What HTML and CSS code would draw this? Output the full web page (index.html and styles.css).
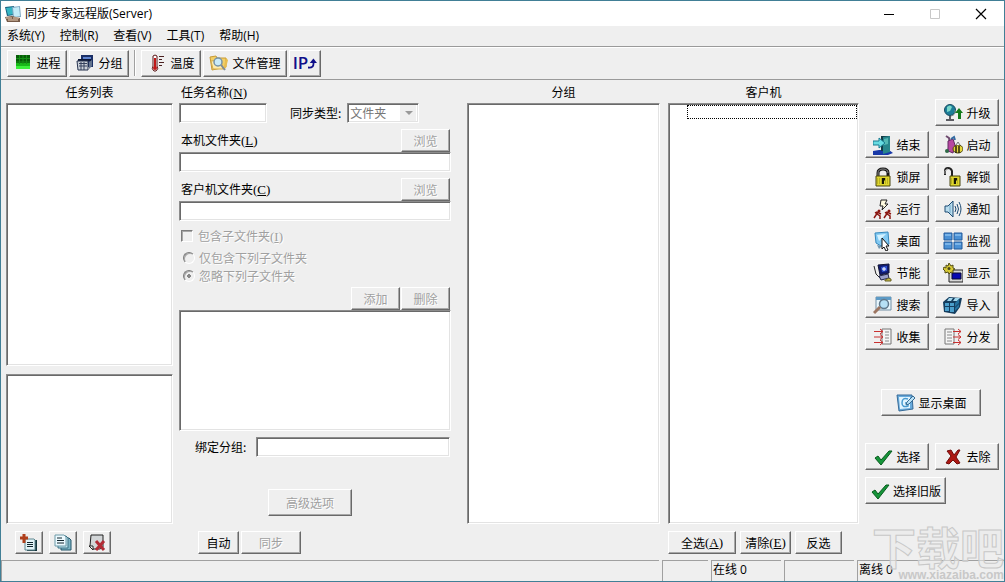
FILE: index.html
```html
<!DOCTYPE html>
<html lang="zh-CN">
<head>
    <meta charset="UTF-8">
    <meta name="viewport" content="width=device-width, initial-scale=1.0">
    <title>同步专家远程版(Server)</title>
    <link rel="stylesheet" href="styles.css">
</head>
<body>
<div class="window">
    <header class="titlebar">
        <svg class="app-icon" viewBox="0 0 18 18">
            <path d="M1 2l9-1 1 9-8 1z" fill="#16617f"/>
            <path d="M2 3l7-1 1 7-6 1z" fill="#35b6c4"/>
            <path d="M8 2l8-1 1 11-8 1z" fill="#7ea9c4"/>
            <path d="M9 3l6-1 1 9-6 1z" fill="#c3ecf8"/>
            <path d="M1 12l7-1 8 2v4H3z" fill="#765b49"/>
            <path d="M2 13h6M4 15h10M9 13h6" stroke="#eed6bc"/>
        </svg>
        <h1>同步专家远程版(Server)</h1>
        <div class="window-controls">
            <button type="button" aria-label="最小化"><svg viewBox="0 0 12 12"><path d="M1 6.500h10" stroke="#000"/></svg></button>
            <button type="button" aria-label="最大化" disabled><svg viewBox="0 0 12 12"><path d="M1.500 1.500h9v9h-9z" fill="none" stroke="#c8c8c8"/></svg></button>
            <button type="button" aria-label="关闭"><svg viewBox="0 0 12 12"><path d="M1 1l10 10M11 1L1 11" stroke="#000" stroke-width="1.200"/></svg></button>
        </div>
    </header>

    <nav class="menubar">
        <button type="button">系统(Y)</button>
        <button type="button">控制(R)</button>
        <button type="button">查看(V)</button>
        <button type="button">工具(T)</button>
        <button type="button">帮助(H)</button>
    </nav>

    <div class="toolbar">
        <button type="button" class="btn">
            <svg class="icon" viewBox="0 0 20 20">
                <path d="M3 2h14v14H3z" fill="#075c07"/>
                <path d="M3 10h14v6H3z" fill="#19b819"/>
                <path d="M3 13h14v3H3z" fill="#3cf03c"/>
                <path d="M6.500 2v9M10 2v9M13.500 2v9M3 5.500h14M3 9h14" stroke="#159015"/>
            </svg>
            进程
        </button>
        <button type="button" class="btn">
            <svg class="icon" viewBox="0 0 20 20">
                <path d="M6 2h12v12H6z" fill="#1b2f66"/>
                <path d="M8 4h8v2H8z" fill="#5e83cf"/>
                <path d="M3 6h13v2H3z" fill="#0d1838"/>
                <path d="M2 8h11v9H3z" fill="#ccd2da" stroke="#26334f"/>
                <path d="M4 10.500h8M4 13h8M6 9v8M9 9v8" stroke="#34415c"/>
                <path d="M14 9l3-2v6l-3 3z" fill="#64748e"/>
            </svg>
            分组
        </button>
        <span class="separator"></span>
        <button type="button" class="btn">
            <svg class="icon" viewBox="0 0 20 20">
                <path d="M6 3q2-2 4 0v10q2 3-1 5H7q-3-2-1-5z" fill="#fff" stroke="#5a1414"/>
                <path d="M8 5v9" stroke="#c01818" stroke-width="2"/>
                <circle cx="8" cy="15" r="2" fill="#c01818"/>
                <path d="M12 3.500h5M12 6.500h3M12 9.500h5M12 12.500h3" stroke="#4a2020"/>
            </svg>
            温度
        </button>
        <button type="button" class="btn">
            <svg class="icon" viewBox="0 0 20 20">
                <path d="M1 4l6-1 1 2h9v9L3 17z" fill="#f3cf66" stroke="#c79a34"/>
                <path d="M2 8l10-1 2 9H4z" fill="#ffebaa" stroke="#d4ab4a"/>
                <path d="M17 5l2 2-2 8-3 2z" fill="#e8bd50"/>
                <circle cx="9" cy="9" r="4" fill="#c9eaf8" stroke="#7792a6" stroke-width="1.500"/>
                <path d="M12 12l4 5" stroke="#7e8c98" stroke-width="2"/>
            </svg>
            文件管理
        </button>
        <button type="button" class="btn btn-ip" aria-label="IP">
            <span>IP</span>
            <svg viewBox="0 0 10 14"><path d="M0 12q7 1 6-6" fill="none" stroke="#10108a" stroke-width="2"/><path d="M2 7l4-5 4 5z" fill="#10108a"/></svg>
        </button>
    </div>

    <main class="workspace">
        <section class="column tasks">
            <h2>任务列表</h2>
            <ul class="listbox task-list"></ul>
            <ul class="listbox task-detail"></ul>
            <div class="actions task-actions">
                <button type="button" class="btn" aria-label="新建任务">
                    <svg class="icon" viewBox="0 0 20 20">
                        <path d="M8 7h10v11H8z" fill="#16353d"/>
                        <path d="M6 6h9l1 1v10H6z" fill="#e3f4f8" stroke="#5f8790"/>
                        <path d="M8 9.500h6M8 11.500h6M8 13.500h6" stroke="#10242c"/>
                        <path d="M5 1v9M1 5h8" stroke="#b0401c" stroke-width="3"/>
                    </svg>
                </button>
                <button type="button" class="btn" aria-label="复制任务">
                    <svg class="icon" viewBox="0 0 20 20">
                        <path d="M8 5h8l2 2v10H8z" fill="#7cb4c4" stroke="#24566a"/>
                        <path d="M5 3h8l2 2v10H5z" fill="#b9dfe9" stroke="#3d7386"/>
                        <path d="M2 2h9l2 2v9H2z" fill="#edfaff" stroke="#6c9aa8"/>
                        <path d="M4 5h5M4 7.500h7M4 10h7" stroke="#10242c"/>
                    </svg>
                </button>
                <button type="button" class="btn" aria-label="删除任务">
                    <svg class="icon" viewBox="0 0 20 20">
                        <path d="M4 2h12v12l-3 2H6l-3-3z" fill="#d3d6d8" stroke="#222"/>
                        <path d="M2 13h4v4z" fill="#fff" stroke="#222"/>
                        <path d="M9 8l8 9M17 8l-8 9" stroke="#b22b35" stroke-width="3"/>
                    </svg>
                </button>
            </div>
        </section>

        <form class="task-form">
            <label class="heading" for="taskName">任务名称<span class="key">(<u>N</u>)</span></label>
            <div class="row">
                <input type="text" id="taskName" class="field field-name">
                <label for="syncType" class="type-label">同步类型:</label>
                <select id="syncType" class="field" disabled>
                    <option>文件夹</option>
                </select>
            </div>
            <div class="row path-row">
                <label for="localFolder">本机文件夹<span class="key">(<u>L</u>)</span></label>
                <button type="button" class="btn btn-small" disabled>浏览</button>
            </div>
            <input type="text" id="localFolder" class="field">
            <div class="row path-row">
                <label for="clientFolder">客户机文件夹<span class="key">(<u>C</u>)</span></label>
                <button type="button" class="btn btn-small" disabled>浏览</button>
            </div>
            <input type="text" id="clientFolder" class="field">
            <div class="option option-check">
                <input type="checkbox" id="subFolders" disabled>
                <label for="subFolders">包含子文件夹<span class="key">(<u>I</u>)</span></label>
            </div>
            <div class="option">
                <input type="radio" name="filter" id="onlyListed" disabled>
                <label for="onlyListed">仅包含下列子文件夹</label>
            </div>
            <div class="option">
                <input type="radio" name="filter" id="ignoreListed" checked disabled>
                <label for="ignoreListed">忽略下列子文件夹</label>
            </div>
            <div class="row filter-actions">
                <button type="button" class="btn btn-small" disabled>添加</button>
                <button type="button" class="btn btn-small" disabled>删除</button>
            </div>
            <ul class="listbox filter-list"></ul>
            <div class="row bind-row">
                <label for="bindGroup">绑定分组:</label>
                <input type="text" id="bindGroup" class="field">
            </div>
            <button type="button" class="btn btn-advanced" disabled>高级选项</button>
            <div class="row sync-actions">
                <button type="button" class="btn btn-auto">自动</button>
                <button type="button" class="btn btn-sync" disabled>同步</button>
            </div>
        </form>

        <section class="column groups">
            <h2>分组</h2>
            <ul class="listbox"></ul>
            <div class="actions"></div>
        </section>

        <section class="column clients">
            <h2>客户机</h2>
            <ul class="listbox">
                <li class="focused"></li>
            </ul>
            <div class="actions">
                <button type="button" class="btn btn-all">全选<span class="key">(<u>A</u>)</span></button>
                <button type="button" class="btn btn-clear">清除<span class="key">(<u>E</u>)</span></button>
                <button type="button" class="btn btn-invert">反选</button>
            </div>
        </section>

        <aside class="commands">
            <div class="command-grid">
                <button type="button" class="btn upgrade">
                    <svg class="icon" viewBox="0 0 20 20">
                        <circle cx="7" cy="7" r="5.500" fill="#1c7d98" stroke="#174b60"/>
                        <path d="M4 4q3-3 5 0l-2 4-3 1z" fill="#79d6c8"/>
                        <path d="M7 13v3M3 17h8" stroke="#5c5c62" stroke-width="2"/>
                        <path d="M12 7q1 5-4 6" fill="none" stroke="#7d8b90"/>
                        <path d="M16 5l-4 5h3v6h3v-6h2z" fill="#137a1b"/>
                    </svg>
                    升级
                </button>
                <button type="button" class="btn">
                    <svg class="icon" viewBox="0 0 20 20">
                        <path d="M0 16l6-1h10l4 3-5 2H0z" fill="#1838a8"/>
                        <path d="M8 1h9v15H8z" fill="#123c46"/>
                        <path d="M10 2l7-1v16l-7 2z" fill="#28868c"/>
                        <path d="M11 4l4-1v6l-4 1z" fill="#54b9b4"/>
                        <path d="M0 6h6V3l6 5-6 5v-3H0z" fill="#68dce2" stroke="#187b90"/>
                    </svg>
                    结束
                </button>
                <button type="button" class="btn">
                    <svg class="icon" viewBox="0 0 20 20">
                        <path d="M3 1l3 2 1 5-2 9" fill="none" stroke="#6f4b70" stroke-width="2"/>
                        <path d="M5 6l5-2 2 6-2 8-5-2z" fill="#b848a0" stroke="#632b65"/>
                        <path d="M8 4l3-2 1 3" stroke="#356ba2" fill="none" stroke-width="2"/>
                        <circle cx="4" cy="16" r="2" fill="#2f6a46"/>
                        <ellipse cx="15" cy="14" rx="5" ry="4" fill="#e5d63b" stroke="#4c4612"/>
                        <path d="M13 11v7M16 11v7" stroke="#29260b" stroke-width="1.500"/>
                        <path d="M13 10l2-3 2 3" fill="#e9f2f6" stroke="#777"/>
                    </svg>
                    启动
                </button>
                <button type="button" class="btn">
                    <svg class="icon" viewBox="0 0 20 20">
                        <path d="M5 10V6q0-4 5-4t5 4v4" fill="none" stroke="#171717" stroke-width="3"/>
                        <path d="M5 9V6q0-4 5-4t5 4" fill="none" stroke="#888" stroke-width="1"/>
                        <path d="M3 9h14v10H3z" fill="#dfd62c" stroke="#4b4710"/>
                        <path d="M4 12h12M4 14h12M4 16h12" stroke="#918b1c" stroke-dasharray="1 1"/>
                        <path d="M9 11h3v2l-1 1v3H9z" fill="#161607"/>
                    </svg>
                    锁屏
                </button>
                <button type="button" class="btn">
                    <svg class="icon" viewBox="0 0 20 20">
                        <path d="M2 8V4q0-3 3-3t4 3v6" fill="none" stroke="#222" stroke-width="2"/>
                        <path d="M2 7V4q1-2 3-2" fill="none" stroke="#aaa"/>
                        <path d="M7 9h10v10H7z" fill="#dfd62c" stroke="#4b4710"/>
                        <path d="M8 12h8M8 14h8M8 16h8" stroke="#918b1c" stroke-dasharray="1 1"/>
                        <path d="M11 11h3v2l-1 1v3h-2z" fill="#161607"/>
                    </svg>
                    解锁
                </button>
                <button type="button" class="btn">
                    <svg class="icon" viewBox="0 0 20 20">
                        <path d="M8 1h6l-2 4h3l-6 6 1-4H7z" fill="#fffbe0" stroke="#222"/>
                        <g fill="none" stroke="#8b1712" stroke-width="1.500">
                            <path d="M5 13l-2 3-2 3M4 15l3 2v3M2 14l2-1 4 2"/>
                            <path d="M15 13l-2 3-2 3M14 15l3 2v3M12 14l2-1 4 2"/>
                        </g>
                        <circle cx="6" cy="12" r="1.500" fill="#8b1712"/>
                        <circle cx="16" cy="12" r="1.500" fill="#8b1712"/>
                    </svg>
                    运行
                </button>
                <button type="button" class="btn">
                    <svg class="icon" viewBox="0 0 20 20">
                        <path d="M2 7h3l5-5v16l-5-5H2z" fill="#b8dcee" stroke="#1d4a72"/>
                        <path d="M7 6v8" stroke="#72a7c5"/>
                        <path d="M12 7q2 3 0 6M14 5q3 5 0 10M16 3q4 7 0 14" fill="none" stroke="#1d4a72"/>
                    </svg>
                    通知
                </button>
                <button type="button" class="btn">
                    <svg class="icon" viewBox="0 0 20 20">
                        <path d="M2 2l13-1 1 12-8 2-5-3z" fill="#82c9f2" stroke="#3588bd"/>
                        <path d="M4 4l9-1-7 7z" fill="#d4f2ff"/>
                        <path d="M4 14l5 1-3 3z" fill="#7196b0"/>
                        <path d="M9 7v11l2-2 2 4 2-1-2-4h3z" fill="#fff" stroke="#111"/>
                    </svg>
                    桌面
                </button>
                <button type="button" class="btn">
                    <svg class="icon" viewBox="0 0 20 20">
                        <path d="M1 2h8v7H1zM11 2h8v7h-8zM1 11h8v7H1zM11 11h8v7h-8z" fill="#4b91d5" stroke="#235b9b"/>
                        <path d="M2 4h6M12 4h6M2 13h6M12 13h6" stroke="#a9d6fa"/>
                    </svg>
                    监视
                </button>
                <button type="button" class="btn">
                    <svg class="icon" viewBox="0 0 20 20">
                        <path d="M5 2l11-1v9l-9 2z" fill="#101b72" stroke="#111434"/>
                        <path d="M8 4l6-1v5l-5 1z" fill="#2f53d2"/>
                        <path d="M11 4v4M9 6h4" stroke="#fff"/>
                        <path d="M1 3l2 8 4 4 5-1" fill="none" stroke="#252525"/>
                        <path d="M6 13l9-2 1 4-8 2z" fill="#9aa0c8" stroke="#22264a"/>
                        <path d="M12 17q4-3 6-1v2h-6z" fill="#c9bc4a" stroke="#666021"/>
                    </svg>
                    节能
                </button>
                <button type="button" class="btn">
                    <svg class="icon" viewBox="0 0 20 20">
                        <path d="M6 7h14v12H6z" fill="#d6d6d6" stroke="#222"/>
                        <path d="M9 10h9v6H9z" fill="#0808b0" stroke="#080830"/>
                        <path d="M1 4l2 1V2l2 1 1-3 2 3 2-1v3l2 1-2 1v3l-2-1-2 2-1-2-3 1V8L0 6z" fill="#d6c936" stroke="#544e14"/>
                        <circle cx="6" cy="5.500" r="1.500" fill="#4a4718"/>
                    </svg>
                    显示
                </button>
                <button type="button" class="btn">
                    <svg class="icon" viewBox="0 0 20 20">
                        <path d="M3 2h15v13H3z" fill="#e7f5fc" stroke="#7390a5"/>
                        <path d="M3 2h15v3H3z" fill="#5e9bc6"/>
                        <circle cx="11" cy="9" r="4.500" fill="#b6e0f5" stroke="#60798c" stroke-width="1.500"/>
                        <path d="M7 12l-6 6" stroke="#9c7561" stroke-width="3"/>
                    </svg>
                    搜索
                </button>
                <button type="button" class="btn">
                    <svg class="icon" viewBox="0 0 20 20">
                        <path d="M0 7l6-5 13 1-2 9-5 7-11-2z" fill="#143d5e"/>
                        <path d="M2 8h4v3H2zM7 8h4v3H7zM2 12h4v4H2zM7 12h4v5H7z" fill="#4b9fcc"/>
                        <path d="M6 3h4L8 6H4zM12 3h5l-3 3h-4z" fill="#a0d6ec"/>
                        <path d="M12 8l4-4v4l-4 4zM12 13l4-4v3l-4 4z" fill="#2372a0"/>
                    </svg>
                    导入
                </button>
                <button type="button" class="btn">
                    <svg class="icon" viewBox="0 0 20 20">
                        <path d="M9 2h9v15H9z" fill="#f5f5f5" stroke="#777"/>
                        <path d="M12 5h4M12 8h4M12 11h4M12 14h4" stroke="#888"/>
                        <path d="M1 4.500h9M1 10h9M1 15.500h9M7 2l3 2.500L7 7M7 7.500l3 2.500-3 2.500M7 13l3 2.500L7 18" fill="none" stroke="#c93030"/>
                    </svg>
                    收集
                </button>
                <button type="button" class="btn">
                    <svg class="icon" viewBox="0 0 20 20">
                        <path d="M2 2h9v15H2z" fill="#f5f5f5" stroke="#777"/>
                        <path d="M4 5h5M4 8h5M4 11h5M4 14h5" stroke="#888"/>
                        <path d="M10 4.500h8M10 10h8M10 15.500h8M15 2l3 2.500L15 7M15 7.500l3 2.500-3 2.500M15 13l3 2.500-3 2.500" fill="none" stroke="#c93030"/>
                    </svg>
                    分发
                </button>
            </div>
            <button type="button" class="btn btn-desktop">
                <svg class="icon" viewBox="0 0 20 20">
                    <path d="M2 2h15l1 14-14 2z" fill="#69abdc" stroke="#376b98"/>
                    <path d="M4 4h11v11l-10 1z" fill="#e2f5ff"/>
                    <path d="M13 6q-6-2-6 4 0 5 6 3v-3h-3" fill="none" stroke="#4a9bd0" stroke-width="1.500"/>
                    <path d="M12 9l6-6 2 2-6 6-3 1z" fill="#bae2f8" stroke="#386b91"/>
                </svg>
                显示桌面
            </button>
            <div class="select-actions">
                <button type="button" class="btn">
                    <svg class="icon" viewBox="0 0 20 20"><path d="M2 11l3-2 3 4 8-9h3L8 18z" fill="#16953a" stroke="#075b1d"/></svg>
                    选择
                </button>
                <button type="button" class="btn">
                    <svg class="icon" viewBox="0 0 20 20"><path d="M4 4l4-1 3 5 4-5h2l-4 7 4 6-3 1-4-4-4 4-3-1 5-7z" fill="#ad1712" stroke="#700c0a"/></svg>
                    去除
                </button>
                <button type="button" class="btn btn-legacy">
                    <svg class="icon" viewBox="0 0 20 20"><path d="M2 11l3-2 3 4 8-9h3L8 18z" fill="#16953a" stroke="#075b1d"/></svg>
                    选择旧版
                </button>
            </div>
        </aside>
    </main>

    <footer class="statusbar">
        <span class="pane pane-message"></span>
        <span class="pane pane-narrow"></span>
        <span class="pane">在线 0</span>
        <span class="pane"></span>
        <span class="pane pane-offline">离线 0</span>
    </footer>

    <div class="watermark">
        <span class="watermark-name">下载吧</span>
        <span class="watermark-url">www.xiazaiba.com</span>
    </div>
</div>
</body>
</html>
```
FILE: styles.css
```css
* {
    box-sizing: border-box;
}
body {
    margin: 0;
    background-color: #efefef;
    color: #000;
    font-family: "Noto Sans CJK SC", sans-serif;
    font-size: 12px;
    line-height: 16px;
}
h1, h2, ul {
    margin: 0;
    padding: 0;
    font-size: 12px;
    font-weight: normal;
    list-style: none;
}
button, input, select {
    margin: 0;
    padding: 0;
    color: inherit;
    font: inherit;
}
.window {
    position: relative;
    display: flex;
    flex-direction: column;
    min-height: 100vh;
    border: 1px solid #417f96;
    overflow: hidden;
}

/* title and menu */
.titlebar {
    display: flex;
    align-items: center;
    height: 25px;
    padding-left: 3px;
    background-color: #fff;
}
.titlebar h1, .menubar, .statusbar {
    font-family: "Open Sans", "Noto Sans CJK SC", sans-serif;
}
.titlebar h1 {
    flex: 1;
    margin-left: 3px;
}
.app-icon {
    width: 18px;
    height: 18px;
}
.window-controls {
    display: flex;
}
.window-controls button {
    width: 46px;
    height: 24px;
    border: none;
    background: none;
}
.window-controls svg {
    display: block;
    width: 12px;
    height: 12px;
    margin: 0 auto;
}
.menubar {
    display: flex;
    gap: 15px;
    height: 20px;
    padding: 0 6px;
}
.menubar button {
    border: none;
    background: none;
    line-height: 16px;
}

/* buttons */
.btn {
    display: flex;
    align-items: center;
    justify-content: center;
    gap: 3px;
    height: 27px;
    border: 1px solid;
    border-color: #fff #696969 #696969 #fff;
    background-color: #efefef;
    box-shadow: inset -1px -1px #a8a8a8;
    white-space: nowrap;
}
.btn:disabled {
    color: #a0a0a0;
    text-shadow: 1px 1px #fff;
}
.icon {
    flex: none;
    width: 20px;
    height: 20px;
}
.key {
    font-family: "Liberation Serif", serif;
    font-size: 13px;
}
.btn .key {
    margin-left: -3px;
}

.toolbar {
    display: flex;
    align-items: center;
    gap: 2px;
    height: 34px;
    padding: 0 6px;
    border-top: 1px solid #9a9a9a;
    border-bottom: 1px solid #9a9a9a;
    box-shadow: inset 0 1px #fff;
}
.toolbar .btn {
    width: 60px;
}
.toolbar .btn:nth-of-type(4) {
    width: 84px;
}
.toolbar .btn-ip {
    width: 32px;
    gap: 0;
    color: #10108a;
    font-family: "Open Sans", sans-serif;
    font-size: 17px;
    font-weight: 600;
}
.btn-ip svg {
    width: 9px;
    height: 14px;
}
.separator {
    width: 2px;
    height: 26px;
    margin: 0 3px;
    border-left: 1px solid #a0a0a0;
    border-right: 1px solid #fff;
}

/* sunken boxes */
.listbox, .field {
    border: 1px solid;
    border-color: #8c8c8c #fff #fff #8c8c8c;
    background-color: #fff;
    box-shadow: inset 1px 1px #696969, inset -1px -1px #e3e3e3;
}
.field {
    width: 100%;
    height: 20px;
    padding: 0 4px;
    border-radius: 0;
}

.workspace {
    display: grid;
    grid-template-columns: 167px 282px 1fr 1fr 134px;
    column-gap: 6px;
    flex: 1;
    padding: 0 5px 6px;
}
.column {
    display: flex;
    flex-direction: column;
}
.column h2 {
    height: 23px;
    padding-top: 4px;
    text-align: center;
}
.column .listbox {
    flex: 1;
}
.tasks .task-list {
    flex: 264;
    margin-bottom: 8px;
}
.tasks .task-detail {
    flex: 149;
}
.actions {
    display: flex;
    gap: 4px;
    height: 30px;
    padding-top: 7px;
}
.actions .btn {
    height: 23px;
}
.task-actions {
    gap: 6px;
    padding-left: 9px;
}
.task-actions .btn {
    width: 28px;
}
.clients {
    margin-left: 2px;
}
.focused {
    height: 14px;
    margin: 1px 1px 0 18px;
    border: 1px dotted #000;
}
.btn-all {
    width: 68px;
}
.btn-clear {
    width: 51px;
}
.btn-invert {
    width: 47px;
}

/* task form */
.task-form {
    display: flex;
    flex-direction: column;
    padding-right: 10px;
}
.heading {
    height: 23px;
    padding: 4px 0 0 2px;
}
.row {
    display: flex;
    align-items: center;
}
.task-form .field-name {
    width: 88px;
}
.type-label {
    margin: 0 6px 0 23px;
}
select.field {
    width: 72px;
    padding: 0 2px;
    appearance: none;
    background: #fff linear-gradient(#efefef, #efefef) no-repeat right 2px center / 16px 16px;
    color: #777;
    opacity: 1;
}
.row:has(select) {
    position: relative;
}
.row:has(select)::after {
    content: "";
    position: absolute;
    left: 226px;
    top: 8px;
    border: 4px solid transparent;
    border-top-color: #999;
    pointer-events: none;
}
.btn-small {
    width: 49px;
    height: 23px;
}
.path-row {
    justify-content: space-between;
    margin-top: 6px;
    padding: 0 1px 0 2px;
}
.option {
    display: flex;
    align-items: center;
    gap: 4px;
    height: 18px;
    padding-left: 4px;
    color: #a0a0a0;
    text-shadow: 1px 1px #fff;
}
.option-check {
    margin: 6px 0 4px;
    padding-left: 2px;
    gap: 5px;
}
.option input {
    width: 12px;
    height: 12px;
    appearance: none;
    border: 1px solid;
    border-color: #7c7c7c #fff #fff #7c7c7c;
    box-shadow: inset 1px 1px #a8a8a8;
}
.option input[type="radio"] {
    border-radius: 50%;
}
.option input[type="radio"]:checked {
    background: radial-gradient(circle, #888 2px, transparent 2px);
}
.filter-actions {
    justify-content: flex-end;
    gap: 1px;
    margin-top: 2px;
    padding-right: 1px;
}
.filter-list {
    flex: 1;
}
.bind-row {
    margin: 6px 1px 0 16px;
    gap: 10px;
}
.bind-row label {
    flex: none;
}
.btn-advanced {
    width: 84px;
    margin: 32px 0 0 89px;
}
.sync-actions {
    gap: 2px;
    margin: 15px 0 0 19px;
}
.sync-actions .btn {
    height: 23px;
}
.btn-auto {
    width: 41px;
}
.btn-sync {
    width: 60px;
}

/* command buttons */
.commands {
    padding-top: 19px;
}
.command-grid, .select-actions {
    display: grid;
    grid-template-columns: 64px 64px;
    gap: 5px 6px;
}
.upgrade {
    grid-column: 2;
}
.btn-desktop {
    width: 100px;
    margin: 39px 0 27px 16px;
}
.select-actions {
    row-gap: 7px;
}
.btn-legacy {
    width: 81px;
}

.statusbar {
    display: flex;
    gap: 3px;
    height: 21px;
}
.pane {
    width: 70px;
    padding-left: 1px;
    border-top: 1px solid #a0a0a0;
    border-left: 1px solid #a0a0a0;
    line-height: 18px;
}
.pane-message {
    flex: 1;
}
.pane-narrow {
    width: 46px;
}
.pane-offline {
    width: 147px;
}

.watermark {
    position: absolute;
    right: 0;
    bottom: 0;
    width: 134px;
    text-align: right;
    pointer-events: none;
}
.watermark span {
    display: block;
    font-weight: bold;
}
.watermark-name {
    color: rgba(235, 235, 235, 0.6);
    font-size: 44px;
    line-height: 46px;
    -webkit-text-stroke: 1px #c8c8c8;
}
.watermark-url {
    color: #c8c8c8;
    font-family: "Liberation Sans", sans-serif;
    font-size: 12px;
    line-height: 12px;
}
```
